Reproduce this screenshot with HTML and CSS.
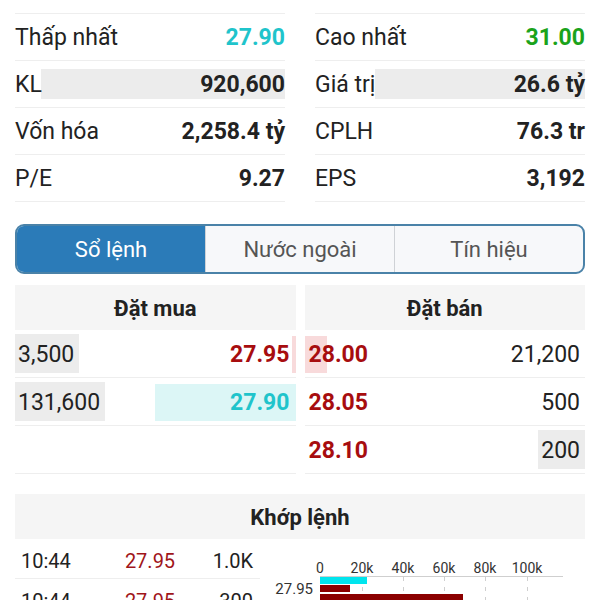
FILE: index.html
```html
<!DOCTYPE html>
<html lang="vi">
<head>
<meta charset="utf-8">
<title>Sổ lệnh</title>
<link rel="stylesheet" href="styles.css">
</head>
<body>
<div class="page">
  <section class="stats">
    <div class="stat"><span class="label">Thấp nhất</span><span class="value cyan">27.90</span></div>
    <div class="stat"><span class="label">Cao nhất</span><span class="value green">31.00</span></div>
    <div class="stat has-bar" style="--w:244px"><span class="label">KL</span><span class="value">920,600</span></div>
    <div class="stat has-bar" style="--w:210px"><span class="label">Giá trị</span><span class="value">26.6 tỷ</span></div>
    <div class="stat"><span class="label">Vốn hóa</span><span class="value">2,258.4 tỷ</span></div>
    <div class="stat"><span class="label">CPLH</span><span class="value">76.3 tr</span></div>
    <div class="stat"><span class="label">P/E</span><span class="value">9.27</span></div>
    <div class="stat"><span class="label">EPS</span><span class="value">3,192</span></div>
  </section>

  <nav class="tabs">
    <div class="tab active">Sổ lệnh</div>
    <div class="tab">Nước ngoài</div>
    <div class="tab">Tín hiệu</div>
  </nav>

  <section class="book">
    <div class="side">
      <div class="side-head">Đặt mua</div>
      <div class="bid-row" style="--vw:64px;--pw:4px;--pc:#f8dadb"><span class="vol">3,500</span><span class="price red">27.95</span></div>
      <div class="bid-row" style="--vw:90px;--pw:141px;--pc:#dcf6f6"><span class="vol">131,600</span><span class="price cyan">27.90</span></div>
      <div class="bid-row empty"></div>
    </div>
    <div class="side">
      <div class="side-head">Đặt bán</div>
      <div class="ask-row" style="--pw:22px;--pc:#f8dadb;--vw:0px"><span class="price red">28.00</span><span class="vol">21,200</span></div>
      <div class="ask-row" style="--pw:0px;--pc:#f8dadb;--vw:0px"><span class="price red">28.05</span><span class="vol">500</span></div>
      <div class="ask-row" style="--pw:0px;--pc:#f8dadb;--vw:47px"><span class="price red">28.10</span><span class="vol">200</span></div>
    </div>
  </section>

  <section class="match">
    <div class="match-head">Khớp lệnh</div>
    <div class="match-body">
      <div class="trades">
        <div class="trade"><span class="t-time">10:44</span><span class="t-price">27.95</span><span class="t-vol">1.0K</span></div>
        <div class="trade"><span class="t-time">10:44</span><span class="t-price">27.95</span><span class="t-vol">300</span></div>
      </div>
      <svg class="chart" width="315" height="80" viewBox="0 0 315 80">
        <g class="axis-labels">
          <text x="50" y="34">0</text>
          <text x="92" y="34">20k</text>
          <text x="133" y="34">40k</text>
          <text x="174" y="34">60k</text>
          <text x="215" y="34">80k</text>
          <text x="257" y="34">100k</text>
        </g>
        <line x1="50" y1="37.5" x2="293" y2="37.5" stroke="#cfcfcf" stroke-width="1"/>
        <g stroke="#cfcfcf" stroke-width="1" stroke-dasharray="4 6">
          <line x1="92.5" y1="38" x2="92.5" y2="80"/>
          <line x1="133.5" y1="38" x2="133.5" y2="80"/>
          <line x1="174.5" y1="38" x2="174.5" y2="80"/>
          <line x1="215.5" y1="38" x2="215.5" y2="80"/>
          <line x1="257.5" y1="38" x2="257.5" y2="80"/>
        </g>
        <rect x="50" y="38" width="47" height="7" fill="#00e5ee"/>
        <rect x="50" y="46" width="30" height="7" fill="#8b0000"/>
        <rect x="50" y="55" width="143" height="8" fill="#8b0000"/>
        <text class="row-label" x="43" y="55">27.95</text>
      </svg>
    </div>
  </section>
</div>
</body>
</html>
```
FILE: styles.css
```css
* { box-sizing: border-box; }
html, body { margin: 0; padding: 0; background: #fff; }
body {
  font-family: Roboto, "Noto Sans", "Liberation Sans", sans-serif;
  color: #222;
  overflow: hidden;
}
.page { width: 600px; padding: 0 15px; }

/* Stats */
.stats {
  display: grid;
  grid-template-columns: 1fr 1fr;
  column-gap: 30px;
  padding-top: 13px;
}
.stat {
  display: flex;
  justify-content: space-between;
  align-items: center;
  height: 47px;
  border-bottom: 1px solid #eeeeee;
  font-size: 23px;
}
.stat:nth-child(-n+2) { border-top: 1px solid #eeeeee; height: 48px; }
.stat.has-bar {
  background: linear-gradient(#ececec, #ececec) right center / var(--w) 30px no-repeat;
}
.label { font-weight: 400; }
.value { font-weight: 700; }
.cyan { color: #1fc4cb; }
.green { color: #1ba31b; }
.red { color: #a70d0f; }

/* Tabs */
.tabs {
  display: flex;
  margin-top: 22px;
  height: 50px;
  border: 2px solid #4a82a8;
  border-radius: 9px;
  overflow: hidden;
  background: #f7f8fa;
}
.tab {
  flex: 1;
  display: flex;
  align-items: center;
  justify-content: center;
  font-size: 22px;
  color: #555;
  border-left: 1px solid #cfd2d6;
}
.tab:first-child { border-left: 0; }
.tab.active { background: #2b7bb8; color: #fff; }

/* Order book */
.book {
  display: grid;
  grid-template-columns: 1fr 1fr;
  column-gap: 9px;
  margin-top: 11px;
}
.side-head {
  height: 45px;
  background: #f5f5f5;
  display: flex;
  align-items: center;
  justify-content: center;
  font-size: 22px;
  font-weight: 700;
  padding-top: 2px;
}
.bid-row, .ask-row {
  display: flex;
  justify-content: space-between;
  align-items: center;
  height: 48px;
  border-bottom: 1px solid #eeeeee;
  font-size: 23px;
  padding-top: 2px;
}
.bid-row {
  padding-left: 3px;
  padding-right: 6px;
  background:
    linear-gradient(#ececec, #ececec) left 56% / var(--vw) 39px no-repeat,
    linear-gradient(var(--pc), var(--pc)) right 56% / var(--pw) 37px no-repeat;
}
.ask-row {
  padding-left: 4px;
  padding-right: 5px;
  background:
    linear-gradient(var(--pc), var(--pc)) left 56% / var(--pw) 37px no-repeat,
    linear-gradient(#ececec, #ececec) right 56% / var(--vw) 39px no-repeat;
}
.price { font-weight: 700; }
.vol { font-weight: 400; color: #222; }

/* Match */
.match { margin-top: 20px; }
.match-head {
  height: 45px;
  background: #f5f5f5;
  display: flex;
  align-items: center;
  justify-content: center;
  font-size: 22px;
  font-weight: 700;
  padding-top: 2px;
}
.match-body {
  display: flex;
  gap: 10px;
}
.trades { width: 245px; flex: none; }
.trade {
  display: grid;
  grid-template-columns: 100px 70px 1fr;
  align-items: center;
  height: 40px;
  border-bottom: 1px solid #eeeeee;
  font-size: 20px;
  padding-top: 4px;
}
.t-time { padding-left: 6px; color: #222; }
.t-price { text-align: center; color: #a0151a; }
.t-vol { text-align: right; padding-right: 7px; color: #222; }
.chart { display: block; flex: none; }
.axis-labels text {
  font-family: Roboto, "Noto Sans", sans-serif;
  font-size: 14px;
  fill: #333;
  text-anchor: middle;
}
.row-label {
  font-family: Roboto, "Noto Sans", sans-serif;
  font-size: 15px;
  fill: #333;
  text-anchor: end;
}
```
